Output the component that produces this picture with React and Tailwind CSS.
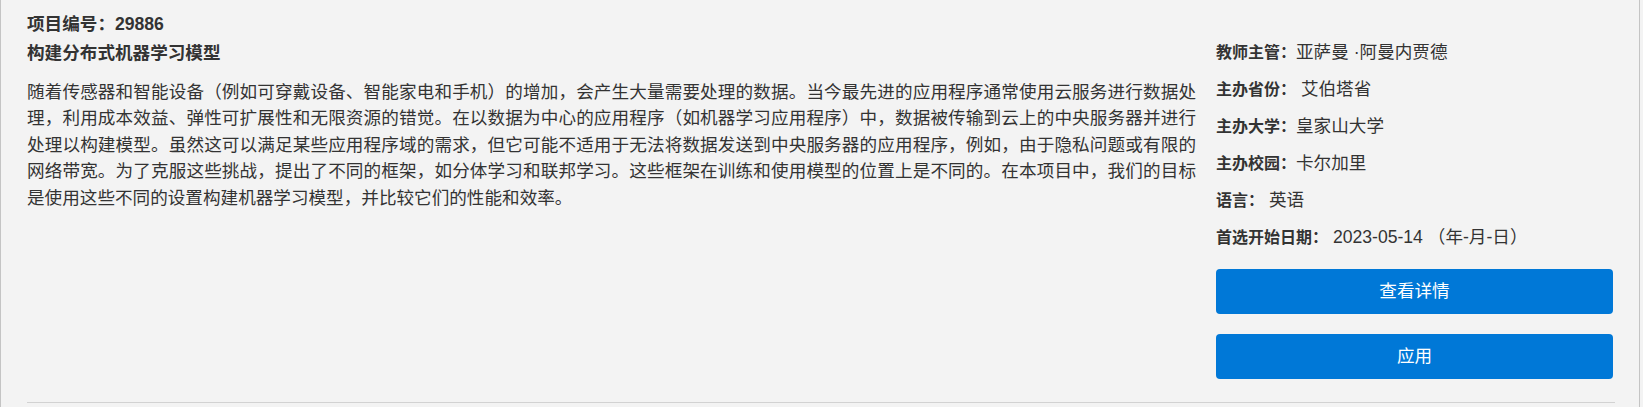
import React from "react";

const info = [
  { label: "教师主管：", value: "亚萨曼 ·阿曼内贾德" },
  { label: "主办省份：", value: " 艾伯塔省" },
  { label: "主办大学：", value: "皇家山大学" },
  { label: "主办校园：", value: "卡尔加里" },
  { label: "语言：", value: " 英语" },
  { label: "首选开始日期：", value: " 2023-05-14 （年-月-日）" },
];

const summary =
  "随着传感器和智能设备（例如可穿戴设备、智能家电和手机）的增加，会产生大量需要处理的数据。当今最先进的应用程序通常使用云服务进行数据处理，利用成本效益、弹性可扩展性和无限资源的错觉。在以数据为中心的应用程序（如机器学习应用程序）中，数据被传输到云上的中央服务器并进行处理以构建模型。虽然这可以满足某些应用程序域的需求，但它可能不适用于无法将数据发送到中央服务器的应用程序，例如，由于隐私问题或有限的网络带宽。为了克服这些挑战，提出了不同的框架，如分体学习和联邦学习。这些框架在训练和使用模型的位置上是不同的。在本项目中，我们的目标是使用这些不同的设置构建机器学习模型，并比较它们的性能和效率。";

export default function App() {
  return (
    <div className="min-h-[407px] bg-[#f3f3f3] font-['Liberation_Sans','Noto_Sans_CJK_SC',sans-serif] text-[#333333]">
      <div className="w-[1640px] min-h-[407px] border-x border-[#c4c4c4] pl-[26px] pr-[24px] pt-[10px]">
        <div className="text-[17.6px] leading-[28px] font-bold">项目编号：29886</div>

        <div className="mt-[1px] flex gap-[20px]">
          {/* left: title + description */}
          <div className="w-[1169px]">
            <h2 className="text-[17.6px] leading-[28px] font-bold">构建分布式机器学习模型</h2>
            <p className="mt-[12px] text-[17.6px] leading-[1.5] text-justify">{summary}</p>
          </div>

          {/* right: project info + actions */}
          <div className="w-[397px] pt-[1px]">
            <div className="flex flex-col gap-[13px]">
              {info.map((row) => (
                <div key={row.label} className="h-[24px] leading-[24px] whitespace-pre">
                  <span className="text-[16px] font-bold">{row.label}</span>
                  <span className="text-[17.6px]">{row.value}</span>
                </div>
              ))}
            </div>
            <div className="mt-[20px] flex flex-col gap-[20px]">
              <button className="h-[45px] w-full rounded-[4px] bg-[#0078d7] text-[17.6px] text-white">
                查看详情
              </button>
              <button className="h-[45px] w-full rounded-[4px] bg-[#0078d7] text-[17.6px] text-white">
                应用
              </button>
            </div>
          </div>
        </div>

        <div className="mt-[23px] h-px bg-[#d2d2d2]" />
      </div>
    </div>
  );
}
